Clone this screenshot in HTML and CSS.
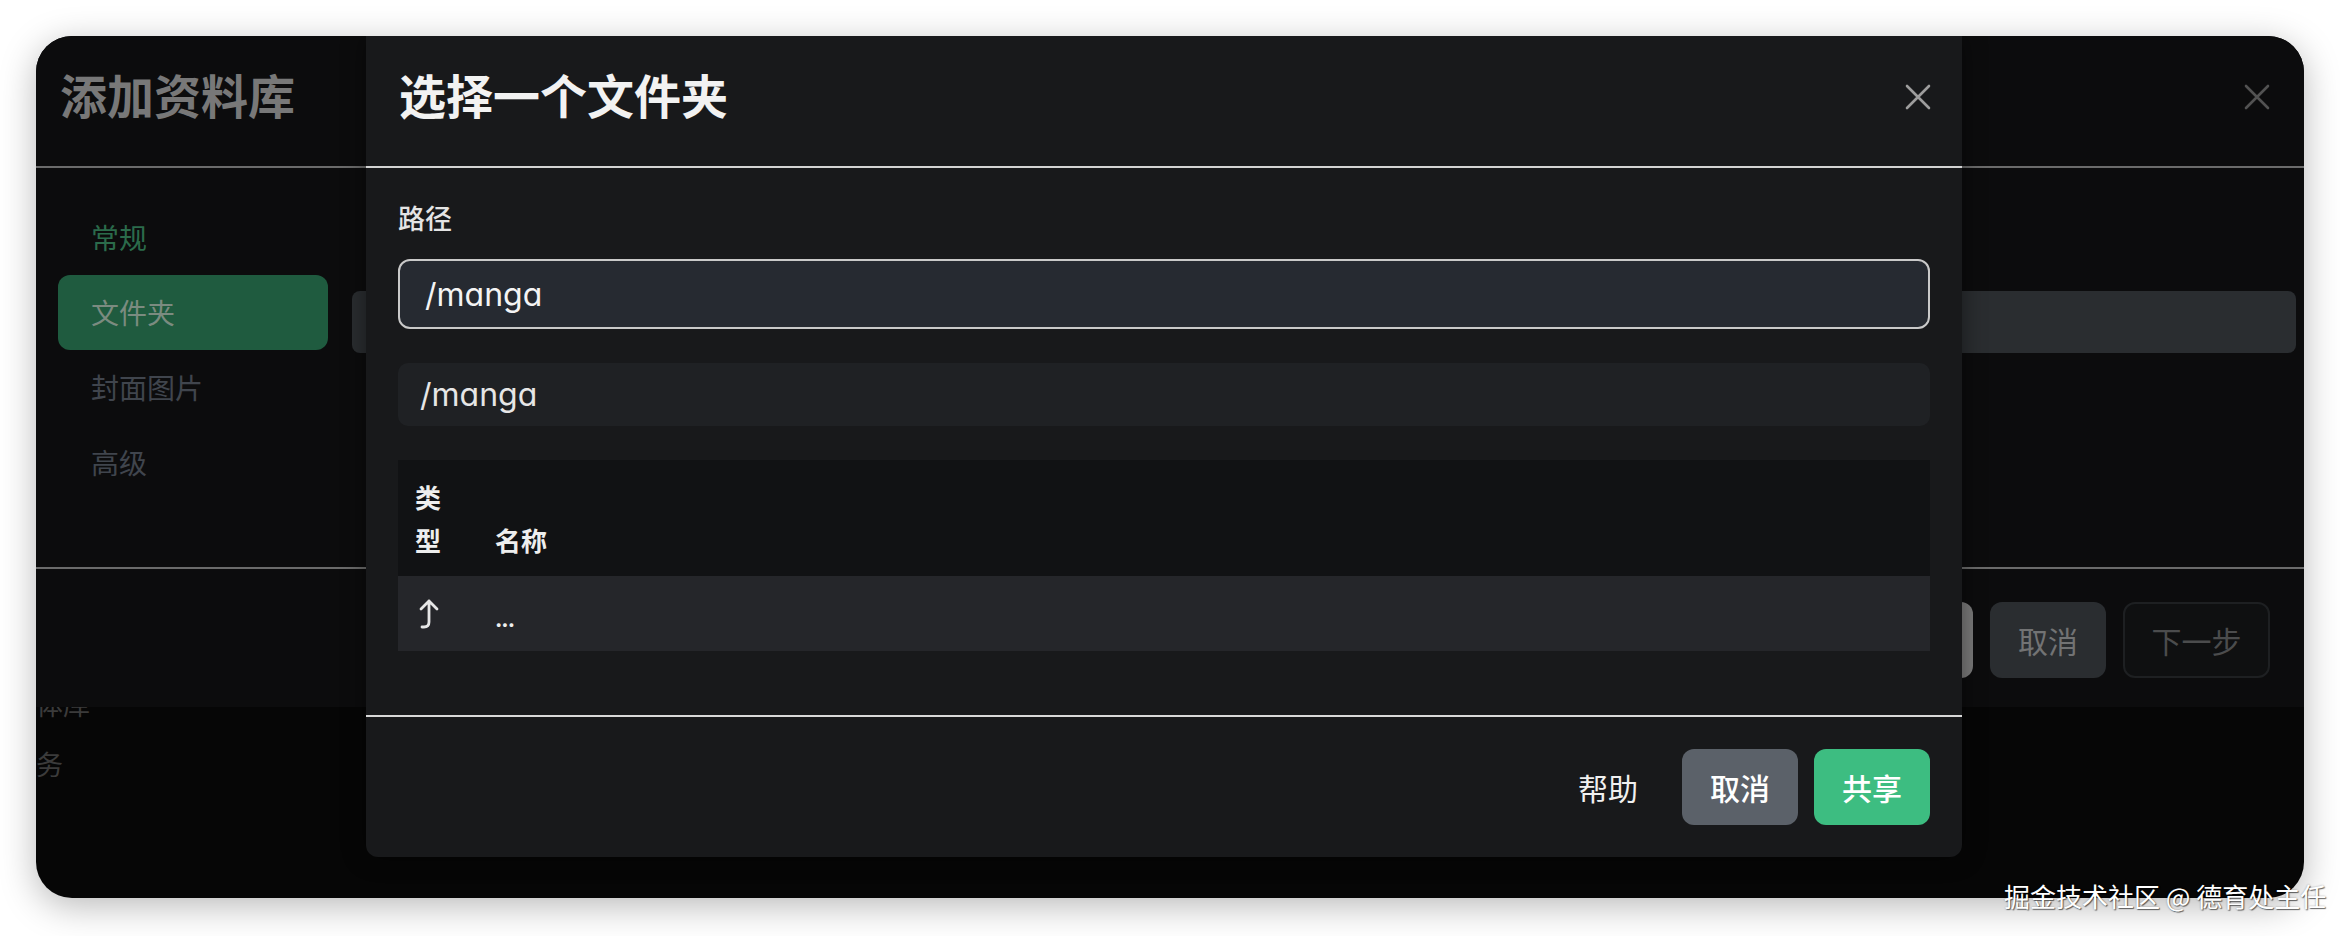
FILE: index.html
```html
<!DOCTYPE html>
<html lang="zh-CN">
<head>
<meta charset="utf-8">
<title>选择一个文件夹</title>
<link rel="stylesheet" href="styles.css">
</head>
<body>
<div class="window">
  <div class="underlay">
    <ul class="side">
      <li>媒体库</li>
      <li>服务</li>
    </ul>
  </div>

  <div class="dialog">
    <div class="dlg-head">
      <h1 class="dlg-title">添加资料库</h1>
      <svg class="close close-dim" viewBox="0 0 26 26" width="26" height="26"><path d="M2 2 L24 24 M24 2 L2 24"/></svg>
    </div>
    <div class="dlg-body">
      <nav class="dlg-nav">
        <a class="nav-item nav-green">常规</a>
        <a class="nav-item nav-active">文件夹</a>
        <a class="nav-item">封面图片</a>
        <a class="nav-item">高级</a>
      </nav>
      <div class="dlg-content">
        <div class="bar"></div>
      </div>
    </div>
    <div class="dlg-foot">
      <button class="obtn obtn-prev"></button>
      <button class="obtn obtn-cancel">取消</button>
      <button class="obtn obtn-next">下一步</button>
    </div>
  </div>

  <div class="picker">
    <div class="pk-head">
      <h2 class="pk-title">选择一个文件夹</h2>
      <svg class="close close-light" viewBox="0 0 26 26" width="26" height="26"><path d="M2 2 L24 24 M24 2 L2 24"/></svg>
    </div>
    <div class="pk-body">
      <div class="pk-label">路径</div>
      <div class="pk-input">/manga</div>
      <div class="pk-crumb">/manga</div>
      <table class="pk-table">
        <thead>
          <tr><th class="col-type">类型</th><th>名称</th></tr>
        </thead>
        <tbody>
          <tr>
            <td class="col-type"><svg class="up" viewBox="0 0 22 30" width="22" height="30"><path d="M3 10 L11 2 L19 10 M11 2 V23 Q11 28 6 28 H4"/></svg></td>
            <td class="dots">...</td>
          </tr>
        </tbody>
      </table>
    </div>
    <div class="pk-foot">
      <button class="pbtn pbtn-help">帮助</button>
      <button class="pbtn pbtn-cancel">取消</button>
      <button class="pbtn pbtn-ok">共享</button>
    </div>
  </div>
</div>
<div class="watermark">掘金技术社区 @ 德育处主任</div>
</body>
</html>
```

FILE: styles.css
```css
* { box-sizing: border-box; }

html, body {
  margin: 0;
  padding: 0;
  background: #ffffff;
  width: 2340px;
  height: 936px;
  overflow: hidden;
  font-family: Inter, "Noto Sans CJK SC", sans-serif;
}

.window {
  position: relative;
  margin: 36px 0 0 36px;
  width: 2268px;
  height: 862px;
  border-radius: 36px;
  overflow: hidden;
  background: #060606;
  box-shadow: 0 8px 36px rgba(0, 0, 0, 0.28);
}

/* underlying page */
.underlay {
  padding-top: 638px;
}
.side {
  list-style: none;
  margin: 0 0 0 -27px;
  padding: 0;
  font-family: "Noto Sans CJK SC", sans-serif;
  font-size: 27px;
  line-height: 60px;
  color: #3b3b3b;
}

/* outer dialog */
.dialog {
  position: absolute;
  top: 0;
  left: 0;
  width: 100%;
  height: 671px;
  background: #0c0c0d;
  display: flex;
  flex-direction: column;
}
.dlg-head {
  height: 132px;
  flex: none;
  border-bottom: 2px solid #6b6b6b;
  display: flex;
  align-items: center;
  justify-content: space-between;
  padding: 0 34px 14px 24px;
}
.dlg-title {
  margin: 0;
  font-family: "Noto Sans CJK SC", sans-serif;
  font-size: 47px;
  font-weight: 700;
  line-height: 1.2;
  color: #787878;
}
.close {
  margin-top: 6px;
}
.close path {
  fill: none;
  stroke-width: 2.6;
  stroke-linecap: round;
}
.close-dim path { stroke: #525252; }
.close-light path { stroke: #9d9d9d; }

.dlg-body {
  height: 399px;
  flex: none;
  display: flex;
}
.dlg-nav {
  width: 316px;
  flex: none;
  padding: 32px 0 0 22px;
  display: flex;
  flex-direction: column;
}
.nav-item {
  display: block;
  width: 270px;
  height: 75px;
  line-height: 75px;
  padding-left: 33px;
  border-radius: 12px;
  font-family: "Noto Sans CJK SC", sans-serif;
  font-size: 28px;
  color: #40454d;
}
.nav-green { color: #2b6b4b; }
.nav-active {
  background: #1f5b3f;
  color: #7b8b80;
}
.dlg-content {
  flex: 1;
  padding: 123px 8px 0 0;
}
.bar {
  height: 62px;
  background: #2a2d30;
  border-radius: 8px;
}
.dlg-foot {
  flex: 1;
  border-top: 2px solid #6b6b6b;
  display: flex;
  align-items: center;
  justify-content: flex-end;
  gap: 17px;
  padding: 4px 34px 0 0;
}
.obtn {
  height: 76px;
  border: none;
  border-radius: 12px;
  font-family: "Noto Sans CJK SC", sans-serif;
  font-size: 30px;
  padding: 0;
}
.obtn-prev { width: 116px; background: #7b7b7b; }
.obtn-cancel { width: 116px; background: #2a2d30; color: #727374; }
.obtn-next {
  width: 147px;
  background: #0f1011;
  border: 2px solid #1e2022;
  color: #4b4c4d;
}

/* folder picker */
.picker {
  position: absolute;
  top: 0;
  left: 330px;
  width: 1596px;
  height: 821px;
  background: #18191b;
  border-radius: 0 0 12px 12px;
  box-shadow: 0 0 24px rgba(0, 0, 0, 0.45);
  display: flex;
  flex-direction: column;
}
.pk-head {
  height: 132px;
  flex: none;
  border-bottom: 2px solid #d3d3d3;
  display: flex;
  align-items: center;
  justify-content: space-between;
  padding: 0 31px 14px 33px;
}
.pk-title {
  margin: 0;
  font-family: "Noto Sans CJK SC", sans-serif;
  font-size: 47px;
  font-weight: 700;
  line-height: 1.2;
  color: #f2f2f2;
}
.pk-body {
  flex: none;
  padding: 30px 32px 64px;
}
.pk-label {
  font-family: "Noto Sans CJK SC", sans-serif;
  font-size: 27px;
  font-weight: 500;
  line-height: 40px;
  color: #e4e4e4;
}
.pk-input {
  margin-top: 21px;
  height: 70px;
  border: 2px solid #c9c9c9;
  border-radius: 12px;
  background: #262a31;
  padding-left: 25px;
  display: flex;
  align-items: center;
  font-size: 32px;
  font-feature-settings: "cv11";
  color: #f4f4f4;
}
.pk-crumb {
  margin-top: 34px;
  height: 63px;
  border-radius: 10px;
  background: #1f2124;
  padding-left: 22px;
  display: flex;
  align-items: center;
  font-size: 32px;
  font-feature-settings: "cv11";
  color: #e6e6e6;
}
.pk-table {
  margin-top: 34px;
  width: 100%;
  border-collapse: collapse;
  font-family: "Noto Sans CJK SC", sans-serif;
  color: #eeeeee;
}
.pk-table thead tr {
  background: #111214;
  height: 116px;
}
.pk-table th {
  text-align: left;
  vertical-align: bottom;
  font-size: 26px;
  font-weight: 700;
  line-height: 43px;
  padding: 0 17px 15px;
}
.pk-table th.col-type,
.pk-table td.col-type {
  width: 80px;
}
.pk-table tbody tr {
  background: #25262a;
  height: 75px;
}
.pk-table td {
  padding: 0 17px;
  vertical-align: middle;
}
.up {
  display: block;
  margin-left: 3px;
}
.up path {
  fill: none;
  stroke: #e6e6e6;
  stroke-width: 2.8;
  stroke-linecap: round;
  stroke-linejoin: round;
}
.dots {
  font-family: Inter, sans-serif;
  font-size: 22px;
  font-weight: 700;
  letter-spacing: -1px;
  padding-top: 10px !important;
}
.pk-foot {
  flex: 1;
  border-top: 2px solid #d8d8d8;
  display: flex;
  align-items: center;
  justify-content: flex-end;
  gap: 16px;
  padding: 0 32px;
}
.pbtn {
  width: 116px;
  height: 76px;
  border: none;
  border-radius: 12px;
  font-family: "Noto Sans CJK SC", sans-serif;
  font-size: 30px;
  font-weight: 500;
  color: #ffffff;
  padding: 0;
}
.pbtn-help { background: transparent; color: #f0f0f0; font-weight: 400; }
.pbtn-cancel { background: #5b6169; }
.pbtn-ok { background: #3dbd81; }

.watermark {
  position: absolute;
  left: 2004px;
  top: 876px;
  font-family: "Noto Sans CJK SC", sans-serif;
  font-size: 26px;
  line-height: 40px;
  color: #ffffff;
  white-space: nowrap;
  text-shadow: 1px 1px 1px rgba(0, 0, 0, 0.55), 0 0 2px rgba(0, 0, 0, 0.35);
}
```
